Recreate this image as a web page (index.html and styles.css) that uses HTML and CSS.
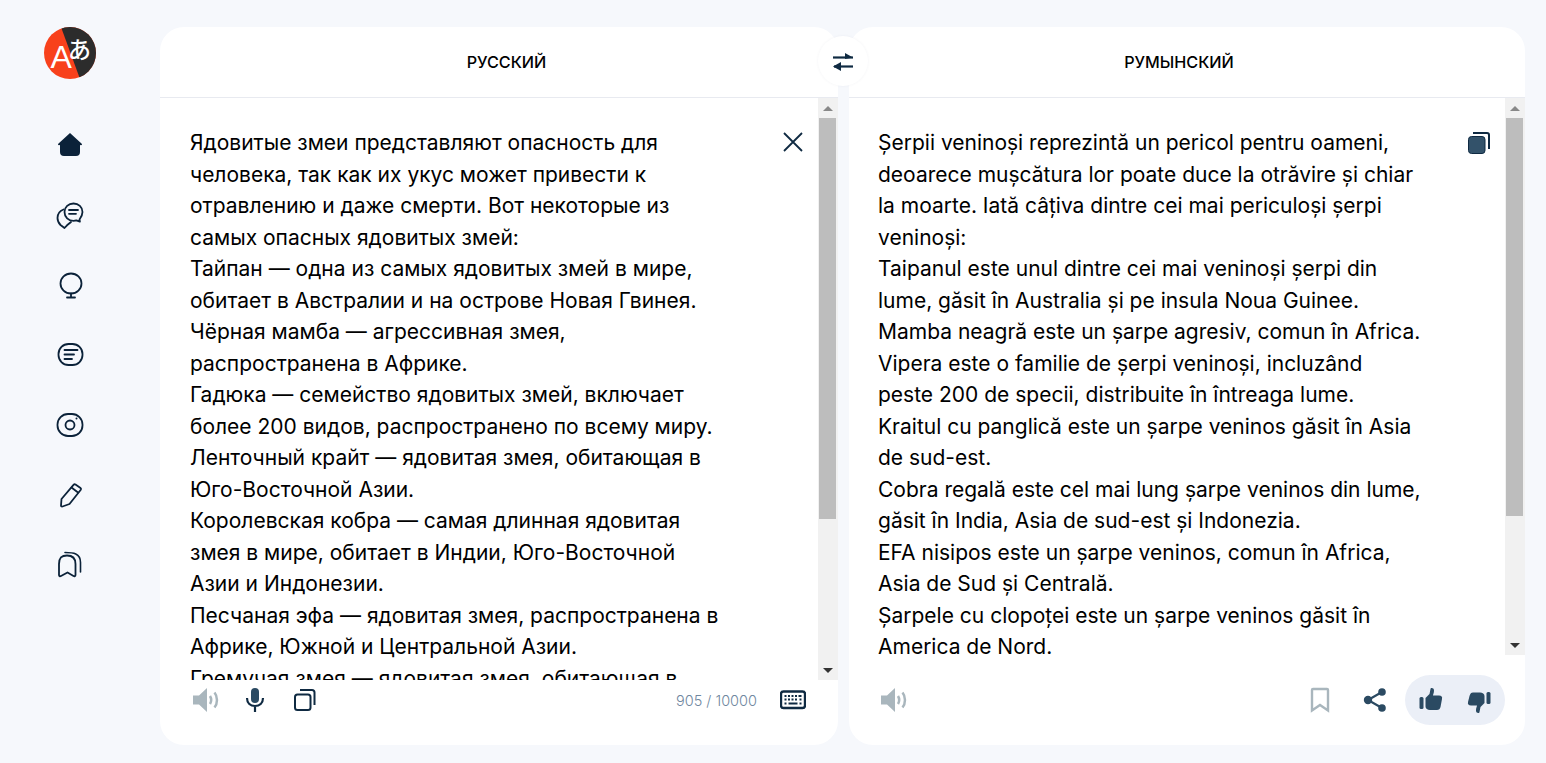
FILE: index.html
```html
<!DOCTYPE html>
<html lang="ru">
<head>
<meta charset="utf-8">
<title>Переводчик</title>
<link rel="stylesheet" href="styles.css">
</head>
<body>
<aside class="sidebar">
  <svg class="logo" width="52" height="52" viewBox="0 0 52 52">
    <defs><clipPath id="logoclip"><circle cx="26" cy="26" r="26"/></clipPath></defs>
    <g clip-path="url(#logoclip)">
      <rect width="52" height="52" fill="#f8411c"/>
      <polygon points="17,0 52,0 52,52 36,52" fill="#2c2c2c"/>
    </g>
    <text x="6.500" y="41" class="logo-a">A</text>
    <text x="24" y="31" class="logo-k">あ</text>
  </svg>
  <nav class="nav">
    <svg width="28" height="28" viewBox="0 0 28 28"><path d="M14 2 L26 13 Q26.500 14.500 24 14 L24 21 Q24 25 20 25 L8 25 Q4 25 4 21 L4 14 Q1.500 14.500 2 13 Z" fill="#0b2239"/></svg>
    <svg class="line" width="28" height="28" viewBox="0 0 28 28"><path d="M17.500 2.500c5 0 9 3.300 9 8.500 0 3.200-1.600 5.600-3 7.500l.4 2.200-3.600-1.300c-1 .3-1.800.4-2.800.4-5 0-9-3.800-9-8.800s4-8.500 9-8.500z"/><path d="M7.500 8.500C3.500 10 1.500 13 1.500 17c0 3 1.300 5.300 3 7l4 3 2.500-2.700 4-3.300"/><path d="M13 9h9M13 12.800h7"/></svg>
    <svg class="line" width="28" height="28" viewBox="0 0 28 28"><ellipse cx="15" cy="12.500" rx="10.500" ry="10"/><path d="M15 22.500v4M11 26.500h8"/></svg>
    <svg class="line" width="28" height="28" viewBox="0 0 28 28"><rect x="2.500" y="3" width="24" height="21" rx="10"/><path d="M8.500 9h13M8.500 13.500h9.500M8.500 18h7.500"/></svg>
    <svg class="line" width="28" height="28" viewBox="0 0 28 28"><rect x="1.500" y="3" width="25" height="22" rx="10.500"/><circle cx="14" cy="14" r="4.500"/><circle cx="20.500" cy="7.500" r="1" fill="#0b2239" stroke="none"/></svg>
    <svg class="line" width="28" height="28" viewBox="0 0 28 28"><path d="M19.500 3.500l5 3.500c.6.500.7 1.200.3 1.800L13.500 23 6.500 25.500c-1 .3-1.500-.3-1.500-1l.5-6.500L17.500 3.800c.6-.6 1.300-.7 2-.3z"/><path d="M15.500 6.500l6.500 5"/></svg>
    <svg class="line" width="28" height="28" viewBox="0 0 28 28"><path d="M3 24V13C3 6.500 5.500 4.500 11 4.500S19.500 6.500 19.500 13v11c0 1.200-1 1.500-2 1L11.500 21.500 5 25c-1 .5-2 .2-2-1z"/><path d="M9 1.500c8 0 15.500.5 15.500 10V21" stroke-width="1.600"/></svg>
  </nav>
</aside>

<main class="translator">
  <section class="panel">
    <header class="panel-head head-source">РУССКИЙ</header>
    <div class="panel-body body-source">
      <div class="text">Ядовитые змеи представляют опасность для<br>человека, так как их укус может привести к<br>отравлению и даже смерти. Вот некоторые из<br>самых опасных ядовитых змей:<br>Тайпан — одна из самых ядовитых змей в мире,<br>обитает в Австралии и на острове Новая Гвинея.<br>Чёрная мамба — агрессивная змея,<br>распространена в Африке.<br>Гадюка — семейство ядовитых змей, включает<br>более 200 видов, распространено по всему миру.<br>Ленточный крайт — ядовитая змея, обитающая в<br>Юго-Восточной Азии.<br>Королевская кобра — самая длинная ядовитая<br>змея в мире, обитает в Индии, Юго-Восточной<br>Азии и Индонезии.<br>Песчаная эфа — ядовитая змея, распространена в<br>Африке, Южной и Центральной Азии.<br>Гремучая змея — ядовитая змея, обитающая в<br>Северной Америке.</div>
      <svg class="action" width="22" height="22" viewBox="0 0 22 22"><path d="M2 2l18 18M20 2L2 20" stroke="#0f2a42" stroke-width="1.800" fill="none"/></svg>
      <div class="scroll">
        <div class="arrow up"></div>
        <div class="thumb thumb-source"></div>
        <div class="track"></div>
        <div class="arrow down"></div>
      </div>
    </div>
    <footer class="panel-foot foot-source">
      <svg class="tool" width="28" height="26" viewBox="0 0 28 26"><path d="M1 8.500h6l8-7.500v24l-8-7.500H1z" fill="#a9b6bd"/><path d="M18 9c1.500 2.500 1.500 5.500 0 8M22.500 5.500c3.300 4 3.300 11 0 15" stroke="#a9b6bd" stroke-width="2.500" fill="none"/></svg>
      <svg class="tool" width="20" height="26" viewBox="0 0 20 26"><rect x="6" y="1" width="8" height="15" rx="4" fill="#2b4a62"/><path d="M2 11c0 5 3.500 8 8 8s8-3 8-8M10 19v6" stroke="#0f2a42" stroke-width="2.200" fill="none"/></svg>
      <svg class="tool tool-copy" width="24" height="24" viewBox="0 0 24 24"><rect x="2" y="6.500" width="15.500" height="15.500" rx="2.500" fill="none" stroke="#0f2a42" stroke-width="2"/><path d="M7 2h12c1.500 0 2.500 1 2.500 2.500V17" fill="none" stroke="#0f2a42" stroke-width="2"/></svg>
      <span class="count">905 / 10000</span>
      <svg width="26" height="20" viewBox="0 0 26 20"><rect x="1" y="1.500" width="24" height="16.500" rx="2.500" fill="#fff" stroke="#0f2a42" stroke-width="2.400"/><path d="M4.500 6h2M8 6h2M11.500 6h2M15 6h2M18.500 6h3M4.500 9.500h2M19.500 9.500h2M4.500 13.500h2M8.500 13.500h9M19.500 13.500h2M8 9.500h2M11.500 9.500h2M15 9.500h2" stroke="#0f2a42" stroke-width="1.800"/></svg>
    </footer>
  </section>

  <button class="swap" type="button" aria-label="swap">
    <svg width="22" height="20" viewBox="0 0 22 20"><path d="M1 6.500h20" stroke="#0f2a42" stroke-width="2.200" fill="none"/><path d="M13 2l8 4.500-8 1.500z" fill="#0f2a42"/><path d="M21 15.500H2" stroke="#0f2a42" stroke-width="2.200" fill="none"/><path d="M1 15.500L9 11v9z" fill="#0f2a42"/></svg>
  </button>

  <section class="panel panel-target">
    <header class="panel-head head-target">РУМЫНСКИЙ</header>
    <div class="panel-body body-target">
      <div class="text">Șerpii veninoși reprezintă un pericol pentru oameni,<br>deoarece mușcătura lor poate duce la otrăvire și chiar<br>la moarte. Iată câțiva dintre cei mai periculoși șerpi<br>veninoși:<br>Taipanul este unul dintre cei mai veninoși șerpi din<br>lume, găsit în Australia și pe insula Noua Guinee.<br>Mamba neagră este un șarpe agresiv, comun în Africa.<br>Vipera este o familie de șerpi veninoși, incluzând<br>peste 200 de specii, distribuite în întreaga lume.<br>Kraitul cu panglică este un șarpe veninos găsit în Asia<br>de sud-est.<br>Cobra regală este cel mai lung șarpe veninos din lume,<br>găsit în India, Asia de sud-est și Indonezia.<br>EFA nisipos este un șarpe veninos, comun în Africa,<br>Asia de Sud și Centrală.<br>Șarpele cu clopoței este un șarpe veninos găsit în<br>America de Nord.</div>
      <svg class="action" width="24" height="24" viewBox="0 0 24 24"><rect x="1.500" y="5.500" width="16.500" height="17" rx="3" fill="#33526a" stroke="#0f2a42" stroke-width="1"/><path d="M6 2h14c1 0 2 1 2 2v14" fill="none" stroke="#0f2a42" stroke-width="2"/></svg>
      <div class="scroll">
        <div class="arrow up"></div>
        <div class="thumb thumb-target"></div>
        <div class="track"></div>
        <div class="arrow down"></div>
      </div>
    </div>
    <footer class="panel-foot foot-target">
      <svg class="tool" width="28" height="26" viewBox="0 0 28 26"><path d="M1 8.500h6l8-7.500v24l-8-7.500H1z" fill="#a9b6bd"/><path d="M18 9c1.500 2.500 1.500 5.500 0 8M22.500 5.500c3.300 4 3.300 11 0 15" stroke="#a9b6bd" stroke-width="2.500" fill="none"/></svg>
      <svg class="bookmark" width="20" height="26" viewBox="0 0 20 26"><path d="M3 2h14c.6 0 1 .4 1 1v20.500l-8-5.500-8 5.500V3c0-.6.400-1 1-1z" fill="none" stroke="#a9b6bd" stroke-width="2.400"/></svg>
      <svg class="share" width="24" height="26" viewBox="0 0 24 26"><path d="M19 5L5 13l14 8" fill="none" stroke="#2b4a62" stroke-width="2.200"/><circle cx="19" cy="5" r="3.800" fill="#2b4a62"/><circle cx="5" cy="13" r="4.200" fill="#2b4a62"/><circle cx="19" cy="21" r="3.800" fill="#2b4a62"/></svg>
      <div class="rate">
        <svg class="thumb-up" width="24" height="24" viewBox="0 0 24 24"><rect x="0.500" y="10" width="4" height="12" rx="1.500" fill="#2b4a62"/><path d="M6.500 11l4-4 1-5c0-1.500 3.500-1.500 3.500 1.500 0 2-.7 3.500-1 5h6c2.500 0 3.500 1.500 3 3.500l-1.500 8c-.5 1.800-1.500 3-3.500 3h-7c-2.500 0-4.500-1.500-4.500-3.500z" fill="#2b4a62"/></svg>
        <svg class="thumb-down" width="24" height="24" viewBox="0 0 24 24"><rect x="19.500" y="2" width="4" height="12" rx="1.500" fill="#2b4a62"/><path d="M17.500 13l-4 4-1 5c0 1.500-3.500 1.500-3.500-1.500 0-2 .7-3.500 1-5H4c-2.500 0-3.500-1.500-3-3.500l1.500-6c.5-1.800 1.500-3.500 3.500-3.500h7c2.500 0 4.500 1.500 4.500 3.500z" fill="#2b4a62"/></svg>
      </div>
    </footer>
  </section>
</main>
</body>
</html>
```
FILE: styles.css
```css
* { box-sizing: border-box; }
html, body { height: 100%; }
body {
  margin: 0;
  background: #f6f8fc;
  display: flex;
  overflow: hidden;
  font-family: Inter, sans-serif;
  color: #000;
}
.sidebar {
  width: 160px;
  flex: none;
  padding: 27px 20px 0 0;
  display: flex;
  flex-direction: column;
  align-items: center;
}
.logo { display: block; }
.logo-a { font: 400 32px "Liberation Sans", sans-serif; fill: #fff; }
.logo-k { font: 500 23px "Noto Sans CJK JP", sans-serif; fill: #fff; }
.nav {
  margin-top: 52px;
  display: flex;
  flex-direction: column;
  gap: 42px;
}
.nav svg { display: block; }
.line { fill: none; stroke: #0b2239; stroke-width: 1.800; stroke-linecap: round; stroke-linejoin: round; }
.translator {
  position: relative;
  display: flex;
  gap: 11px;
  padding-top: 27px;
  height: 745px;
}
.panel {
  width: 678px;
  background: #fff;
  border-radius: 24px;
  display: flex;
  flex-direction: column;
  overflow: hidden;
}
.panel-target { width: 676px; }
.panel-head {
  height: 71px;
  flex: none;
  display: flex;
  align-items: center;
  justify-content: center;
  font-size: 16.200px;
  font-weight: 500;
  border-bottom: 1px solid #e8eaf0;
}
.head-source { padding-left: 15px; }
.head-target { padding-right: 16px; }
.panel-body { display: flex; min-height: 0; }
.body-source { height: 582px; }
.body-target { height: 557px; }
.text {
  flex: 1;
  min-width: 0;
  overflow: hidden;
  padding: 29px 0 0 30px;
  font-size: 21px;
  line-height: 31.500px;
  white-space: nowrap;
}
.body-target .text { padding-left: 29px; }
.action { flex: none; margin: 33px 14px 0 0; }
.scroll {
  width: 20px;
  flex: none;
  background: #f1f1f1;
  display: flex;
  flex-direction: column;
}
.arrow { height: 20px; flex: none; display: flex; align-items: center; justify-content: center; }
.arrow::before { content: ""; border-left: 5px solid transparent; border-right: 5px solid transparent; }
.up::before { border-bottom: 5px solid #888; }
.down::before { border-top: 5px solid #333; }
.thumb { margin: 0 2px 0 1px; background: #bdbdbd; flex: none; }
.thumb-source { height: 401px; }
.thumb-target { height: 398px; }
.track { flex: 1; }
.panel-foot { display: flex; align-items: center; flex: none; }
.foot-source { height: 65px; padding: 0 32px 25px 32px; }
.foot-target { height: 90px; padding: 0 20px 0 31px; }
.tool { display: block; }
.foot-source .tool { margin-right: 25px; }
.foot-source .tool-copy { margin-left: 3px; margin-right: 0; }
.count { margin-left: auto; margin-right: 23px; font-size: 14.500px; font-weight: 300; color: #6f87a0; }
.bookmark { margin-left: auto; margin-right: 33px; }
.share { margin-right: 18px; }
.rate {
  width: 100px;
  height: 50px;
  border-radius: 25px;
  background: #ebeff7;
  display: flex;
  align-items: center;
  justify-content: space-between;
  padding: 0 14px;
}
.thumb-up { margin-top: -2px; }
.thumb-down { margin-top: 3px; }
.swap {
  position: absolute;
  z-index: 1;
  left: 658px;
  top: 36px;
  width: 50px;
  height: 50px;
  padding: 0;
  border: 0;
  border-radius: 50%;
  background: #fff;
  box-shadow: 0 0 3px rgba(20, 40, 80, 0.05);
  display: flex;
  align-items: center;
  justify-content: center;
}
```
